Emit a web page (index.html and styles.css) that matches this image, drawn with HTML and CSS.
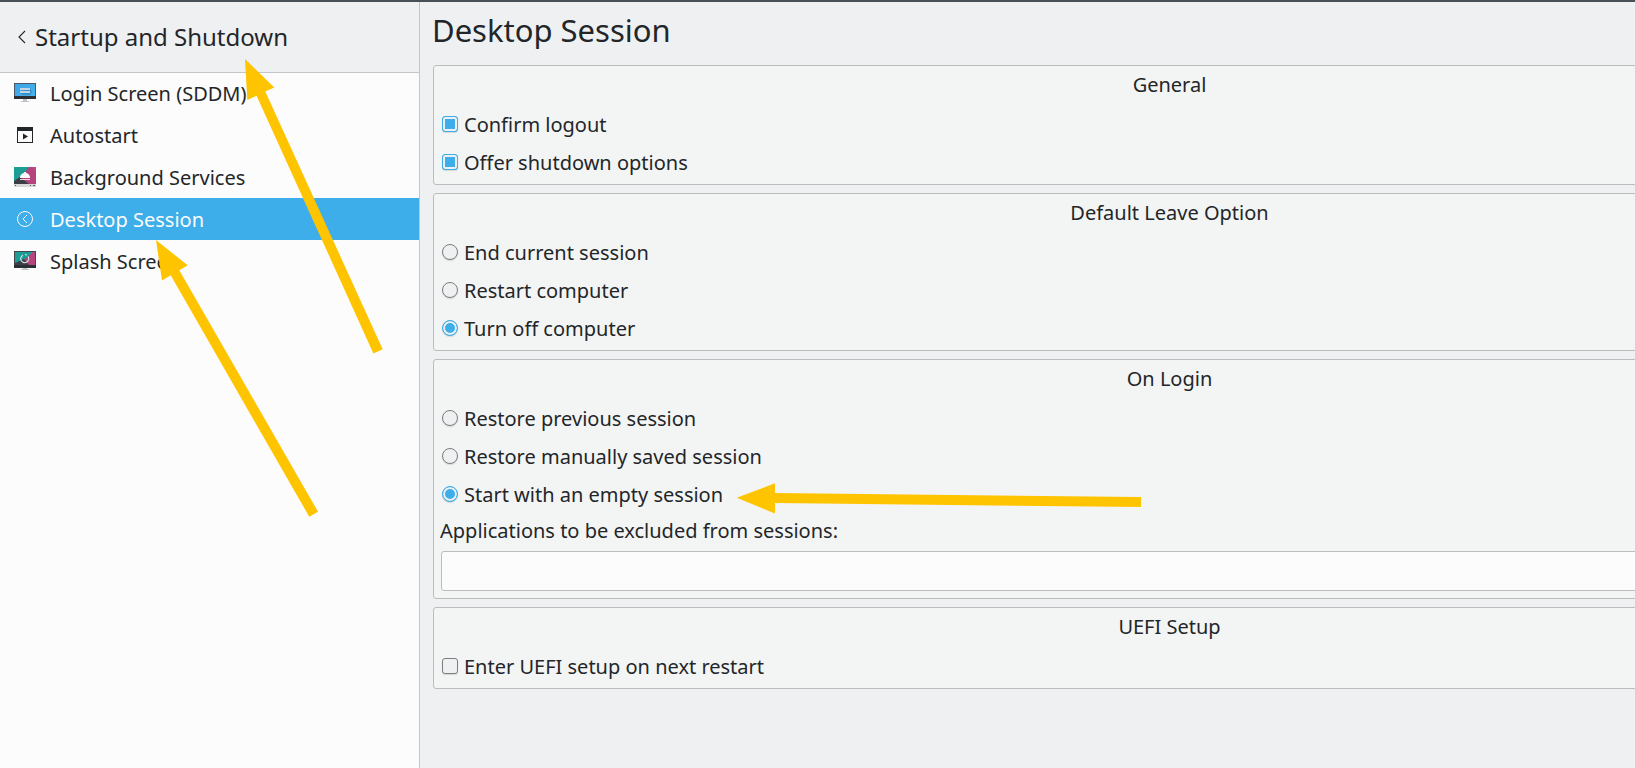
FILE: index.html
```html
<!DOCTYPE html>
<html lang="en">
<head>
<meta charset="utf-8">
<title>Desktop Session</title>
<link rel="stylesheet" href="styles.css">
</head>
<body>
<div class="window">
  <aside class="sidebar">
    <button class="back" type="button">
      <svg class="back-icon" width="8" height="14" viewBox="0 0 8 14"><path d="M7 1 L1 7 L7 13" fill="none" stroke="#232629" stroke-width="1.1"/></svg>
      <span>Startup and Shutdown</span>
    </button>
    <nav class="nav">
      <a class="item" href="#login">
        <svg class="icon" viewBox="0 0 22 22">
          <defs><linearGradient id="sky" x1="0" y1="0" x2="1" y2="1"><stop offset="0" stop-color="#3ba5e6"/><stop offset="1" stop-color="#47b2ea"/></linearGradient></defs>
          <path d="M9 17h4v2h2v1H7v-1h2z" fill="#c0c4c8"/>
          <rect y="1" width="22" height="16" fill="#4a5a6a"/>
          <rect x="1" y="2" width="20" height="12" fill="url(#sky)"/>
          <path d="M16 6l2 4-2 3H8l-2-3z" fill="#2d7fbd" opacity=".6"/>
          <path d="M6 6h10v2H6zM6 9h10v2H6z" fill="#c3d4e2"/>
          <rect y="14" width="22" height="3" fill="#2b3035"/>
        </svg>
        <span>Login Screen (SDDM)</span>
      </a>
      <a class="item" href="#autostart">
        <svg class="icon" viewBox="0 0 22 22"><path d="M3 3h16v16H3zM4 7v11h14V7z" fill="#232629" fill-rule="evenodd"/><path d="M9 9.500v6l5-3z" fill="#232629"/></svg>
        <span>Autostart</span>
      </a>
      <a class="item" href="#services">
        <svg class="icon" viewBox="0 0 22 22">
          <rect y="1" width="22" height="18" fill="#b5437c"/>
          <path d="M0 1h15L7 11l-7 5z" fill="#1c9e96"/>
          <path d="M15 1h3l4 4V1z" fill="#bd4c8a"/>
          <path d="M0 18V15l6-4 9 7z" fill="#3b3f45"/>
          <path d="M10 6h2v1a4.500 4.500 0 0 1 4 5H6a4.500 4.500 0 0 1 4-5z" fill="#fcfcfc"/>
          <rect x="6" y="13" width="10" height="1" fill="#f3d5e3"/>
          <rect y="18" width="22" height="3" fill="#d6d8da"/>
          <path d="M1 19h1v1H1zM16 19h1v1h-1zM19 19h2v1h-2z" fill="#555a60"/>
        </svg>
        <span>Background Services</span>
      </a>
      <a class="item selected" href="#session" aria-current="page">
        <svg class="icon" viewBox="0 0 22 22" fill="none" stroke="#fcfcfc" stroke-width="1"><circle cx="11" cy="11" r="7.500"/><path d="M13 7l-4 4 4 4"/></svg>
        <span>Desktop Session</span>
      </a>
      <a class="item" href="#splash">
        <svg class="icon" viewBox="0 0 22 22">
          <path d="M9 17h4v2h2v1H7v-1h2z" fill="#c0c4c8"/>
          <rect y="1" width="22" height="17" fill="#41474d"/>
          <rect x="1" y="2" width="20" height="13" fill="#b5437c"/>
          <path d="M1 2h18L11 9l-10 6z" fill="#1c9e96"/>
          <path d="M1 15v-2l9-4 5 6z" fill="#3b3f45"/>
          <path d="M8.800 5.200A4 4 0 1 0 14 6.400M11 4.500a4 4 0 0 1 2 .6" fill="none" stroke="#dce4e6" stroke-width="1.100"/>
          <rect y="15" width="22" height="3" fill="#2b3035"/>
        </svg>
        <span>Splash Screen</span>
      </a>
    </nav>
  </aside>
  <main class="content">
    <h1 class="title">Desktop Session</h1>
    <form class="groups">
      <fieldset class="group" aria-labelledby="g1">
        <h2 class="caption" id="g1">General</h2>
        <label class="option"><input class="check" type="checkbox" checked>Confirm logout</label>
        <label class="option"><input class="check" type="checkbox" checked>Offer shutdown options</label>
      </fieldset>
      <fieldset class="group" aria-labelledby="g2">
        <h2 class="caption" id="g2">Default Leave Option</h2>
        <label class="option"><input class="check radio" type="radio" name="leave">End current session</label>
        <label class="option"><input class="check radio" type="radio" name="leave">Restart computer</label>
        <label class="option"><input class="check radio" type="radio" name="leave" checked>Turn off computer</label>
      </fieldset>
      <fieldset class="group" aria-labelledby="g3">
        <h2 class="caption" id="g3">On Login</h2>
        <label class="option"><input class="check radio" type="radio" name="login">Restore previous session</label>
        <label class="option"><input class="check radio" type="radio" name="login">Restore manually saved session</label>
        <label class="option"><input class="check radio" type="radio" name="login" checked>Start with an empty session</label>
        <label class="field-label" for="excluded">Applications to be excluded from sessions:</label>
        <input class="field" id="excluded" type="text">
      </fieldset>
      <fieldset class="group" aria-labelledby="g4">
        <h2 class="caption" id="g4">UEFI Setup</h2>
        <label class="option"><input class="check" type="checkbox">Enter UEFI setup on next restart</label>
      </fieldset>
    </form>
  </main>
  <svg class="arrows" width="1200" height="560" viewBox="0 0 1200 560" aria-hidden="true">
    <path d="M245 59L274.300 87.400L265.300 91.500L382.700 349.300L373.400 353.500L256.600 95.700L247.300 100Z"/>
    <path d="M156 240L187.700 265.300L179.300 270.300L318 511.700L309.300 516.800L170.700 275.300L162 280.500Z"/>
    <path d="M736.700 497.800L775 483.300V493L1141 497V507L775 503V513.500Z"/>
  </svg>
</div>
</body>
</html>
```
FILE: styles.css
```css
* {
  box-sizing: border-box;
}

body {
  margin: 0;
  background: #eff0f1;
  color: #232629;
  font: 20px/38px "Noto Sans", sans-serif;
}

.window {
  position: relative;
  display: flex;
  min-height: 100vh;
  border-top: 2px solid #475057;
  overflow: hidden;
}

.sidebar {
  flex: none;
  width: 420px;
  border-right: 1px solid #c4c6c8;
  background: #fcfcfc;
}

.back {
  position: relative;
  display: flex;
  align-items: center;
  gap: 9px;
  width: 100%;
  height: 70px;
  padding: 0 18px;
  border: 0;
  background: #eff0f1;
  box-shadow: 0 1px #c4c6c8;
  color: inherit;
  font: inherit;
  font-size: 24px;
}

.item {
  display: flex;
  align-items: center;
  gap: 14px;
  height: 42px;
  padding: 2px 14px 0;
  color: inherit;
  text-decoration: none;
}

.selected {
  background: #3daee9;
  color: #fcfcfc;
}

.icon {
  flex: none;
  width: 22px;
  height: 22px;
  margin-bottom: 2px;
}

.content {
  flex: 1;
  min-width: 0;
  /* the settings panel runs on past the right edge of the window */
  margin-right: -272px;
  padding-left: 12px;
}

.title {
  margin: 0 0 6px;
  font-size: 31px;
  font-weight: 400;
  line-height: 57px;
}

.groups {
  display: flex;
  flex-direction: column;
  gap: 8px;
  padding-left: 1px;
}

.group {
  min-width: 0;
  margin: 0;
  padding: 0 7px 2px 6px;
  border: 1px solid #babcbe;
  border-radius: 3px;
  background: #f3f5f4;
}

.caption {
  margin: 0 0 2px;
  font-size: 20px;
  font-weight: 400;
  line-height: 38px;
  text-align: center;
}

.option {
  display: flex;
  align-items: center;
  gap: 6px;
  height: 38px;
  padding-left: 2px;
}

.check {
  appearance: none;
  flex: none;
  width: 16px;
  height: 16px;
  margin: 0 0 2px;
  border: 1px solid #7b7e80;
  border-radius: 3px;
  background: #eff0f1;
  box-shadow: 0 1px 1px #d5d7d8;
}

.check:checked {
  border-color: #3daee9;
  background: #3daee9;
  box-shadow: inset 0 0 0 2px #eff0f1, 0 1px 1px #d5d7d8;
}

.radio {
  border-radius: 50%;
}

.field-label {
  display: block;
  line-height: 33px;
}

.field {
  display: block;
  width: calc(100% - 1px);
  height: 40px;
  margin: 4px 0 5px 1px;
  padding: 0 8px;
  border: 1px solid #babcbe;
  border-radius: 3px;
  background: #fcfcfc;
  color: inherit;
  font: inherit;
}

.arrows {
  position: absolute;
  top: -2px;
  left: 0;
  fill: #ffc400;
  pointer-events: none;
}
```
